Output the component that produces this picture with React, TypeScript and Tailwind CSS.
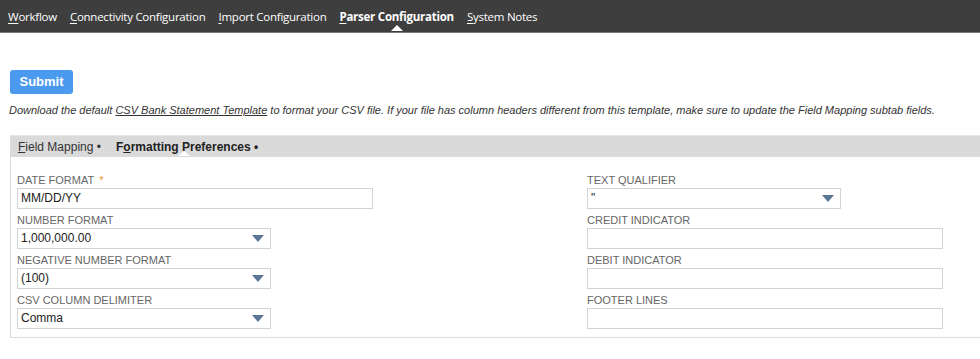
const navItems = [
  { label: "Workflow", active: false },
  { label: "Connectivity Configuration", active: false },
  { label: "Import Configuration", active: false },
  { label: "Parser Configuration", active: true },
  { label: "System Notes", active: false },
];

function Caret() {
  return (
    <svg width="12" height="7" viewBox="0 0 12 7" className="shrink-0">
      <path d="M0 0h12L6 7z" fill="#5a7896" />
    </svg>
  );
}

function Label({ text, required }: { text: string; required?: boolean }) {
  return (
    <div className="h-[13px] text-[11px] leading-[13px] text-[#666] uppercase">
      {text}
      {required && <span className="ml-[5px] text-[#e6922e]">*</span>}
    </div>
  );
}

function TextBox({ value, width }: { value?: string; width: string }) {
  return (
    <div
      className={`mt-[1px] h-[21px] ${width} border border-[#d4d4d4] bg-white px-[3px] text-[12px] leading-[19px] text-[#222]`}
    >
      {value}
    </div>
  );
}

function SelectBox({ value, width }: { value: string; width: string }) {
  return (
    <div
      className={`mt-[1px] h-[21px] ${width} border border-[#d4d4d4] bg-white pl-[3px] pr-[6px] flex items-center justify-between text-[12px] text-[#222]`}
    >
      <span>{value}</span>
      <Caret />
    </div>
  );
}

function Field({ children }: { children: React.ReactNode }) {
  return <div className="h-[40px] flex flex-col">{children}</div>;
}

export default function App() {
  return (
    <div
      className="w-[980px] h-[359px] bg-white overflow-hidden"
      style={{ fontFamily: '"Liberation Sans", Arial, sans-serif' }}
    >
      <nav
        className="relative h-[33px] bg-[#3e3e3e] border-b border-[#777] flex items-center gap-[13px] pl-[8px] pt-[1px] text-[11.5px] tracking-[-0.25px] text-white"
        style={{ fontFamily: '"Open Sans", sans-serif' }}
      >
        {navItems.map((n) => (
          <div key={n.label} className={`relative ${n.active ? "font-bold" : ""}`}>
            <span className="underline underline-offset-2">{n.label[0]}</span>
            {n.label.slice(1)}
            {n.active && (
              <span className="absolute left-1/2 -translate-x-1/2 top-[17px] w-0 h-0 border-l-[6px] border-r-[6px] border-b-[6px] border-l-transparent border-r-transparent border-b-white" />
            )}
          </div>
        ))}
      </nav>

      <div className="pl-[10px] pt-[36px]">
        <button className="h-[24px] w-[63px] rounded-[3px] bg-[#4a9bef] text-white text-[13px] font-bold">
          Submit
        </button>
      </div>

      <p className="mt-[9px] pl-[9px] text-[11px] italic text-[#333] leading-[14px]">
        Download the default{" "}
        <span className="underline">CSV Bank Statement Template</span> to format your CSV file. If
        your file has column headers different from this template, make sure to update the Field
        Mapping subtab fields.
      </p>

      <div className="ml-[10px] mt-[18px] border-l border-b border-[#dcdcdc]">
        <div className="relative h-[22px] bg-[#dadada] border-t border-[#e6e6e6] flex items-center gap-[15px] pl-[7px] pt-[2px] text-[12px] text-[#333]">
          <span>
            <span className="underline">F</span>ield Mapping •
          </span>
          <span className="relative font-bold text-[#222]">
            F<span className="underline">o</span>rmatting Preferences •
            <span className="absolute left-[62px] top-[13px] w-0 h-0 border-l-[6px] border-r-[6px] border-b-[5px] border-l-transparent border-r-transparent border-b-white" />
          </span>
        </div>

        <div className="flex pt-[17px] pb-[3px] pl-[6px]">
          <div className="w-[570px]">
            <Field>
              <Label text="Date Format" required />
              <TextBox value="MM/DD/YY" width="w-[356px]" />
            </Field>
            <Field>
              <Label text="Number Format" />
              <SelectBox value="1,000,000.00" width="w-[254px]" />
            </Field>
            <Field>
              <Label text="Negative Number Format" />
              <SelectBox value="(100)" width="w-[254px]" />
            </Field>
            <Field>
              <Label text="CSV Column Delimiter" />
              <SelectBox value="Comma" width="w-[254px]" />
            </Field>
          </div>
          <div>
            <Field>
              <Label text="Text Qualifier" />
              <SelectBox value={'"'} width="w-[254px]" />
            </Field>
            <Field>
              <Label text="Credit Indicator" />
              <TextBox width="w-[356px]" />
            </Field>
            <Field>
              <Label text="Debit Indicator" />
              <TextBox width="w-[356px]" />
            </Field>
            <Field>
              <Label text="Footer Lines" />
              <TextBox width="w-[356px]" />
            </Field>
          </div>
        </div>
      </div>
    </div>
  );
}
